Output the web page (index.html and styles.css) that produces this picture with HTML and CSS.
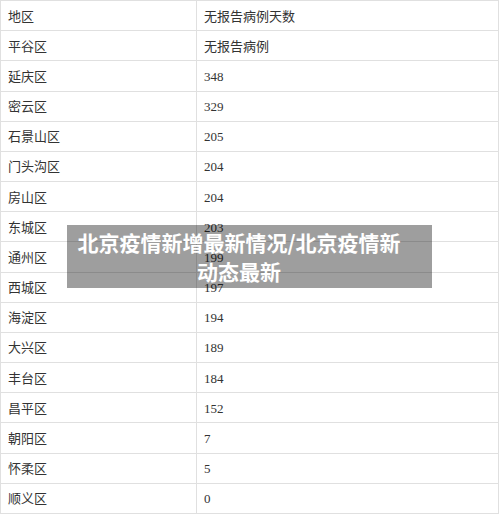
FILE: index.html
```html
<!DOCTYPE html>
<html lang="zh-CN">
<head>
<meta charset="utf-8">
<title>北京疫情新增最新情况</title>
<link rel="stylesheet" href="styles.css">
</head>
<body>
<div class="page">
  <table class="data">
    <colgroup><col class="c1"><col class="c2"></colgroup>
    <tbody>
      <tr><td>地区</td><td>无报告病例天数</td></tr>
      <tr><td>平谷区</td><td>无报告病例</td></tr>
      <tr><td>延庆区</td><td>348</td></tr>
      <tr><td>密云区</td><td>329</td></tr>
      <tr><td>石景山区</td><td>205</td></tr>
      <tr><td>门头沟区</td><td>204</td></tr>
      <tr><td>房山区</td><td>204</td></tr>
      <tr><td>东城区</td><td>203</td></tr>
      <tr><td>通州区</td><td>199</td></tr>
      <tr><td>西城区</td><td>197</td></tr>
      <tr><td>海淀区</td><td>194</td></tr>
      <tr><td>大兴区</td><td>189</td></tr>
      <tr><td>丰台区</td><td>184</td></tr>
      <tr><td>昌平区</td><td>152</td></tr>
      <tr><td>朝阳区</td><td>7</td></tr>
      <tr><td>怀柔区</td><td>5</td></tr>
      <tr><td>顺义区</td><td>0</td></tr>
    </tbody>
  </table>
  <div class="banner"><span class="banner-text">北京疫情新增最新情况/北京疫情新动态最新</span></div>
</div>
</body>
</html>
```
FILE: styles.css
```css
html, body {
  margin: 0;
  padding: 0;
  background: #ffffff;
}
.page {
  position: relative;
  width: 500px;
  height: 514px;
  overflow: hidden;
}
.data {
  border-collapse: collapse;
  table-layout: fixed;
  width: 499px;
  font-family: "Liberation Serif", "Noto Sans CJK SC", serif;
  font-size: 13px;
  color: #333333;
}
.c1 { width: 196px; }
.data td {
  border: 1px solid #e0e0e0;
  height: 30.18px;
  padding: 2px 7px 0 7px;
  box-sizing: border-box;
  vertical-align: middle;
  line-height: 16px;
}
.banner {
  position: absolute;
  left: 67px;
  top: 225px;
  width: 365px;
  height: 63px;
  background: rgba(0, 0, 0, 0.38);
  box-sizing: border-box;
  padding: 0 28px 0 7px;
  display: flex;
  align-items: center;
  justify-content: center;
  text-align: center;
}
.banner-text {
  font-family: "Noto Sans CJK SC", sans-serif;
  font-weight: 700;
  font-size: 21px;
  line-height: 28.5px;
  color: #ffffff;
}
```
